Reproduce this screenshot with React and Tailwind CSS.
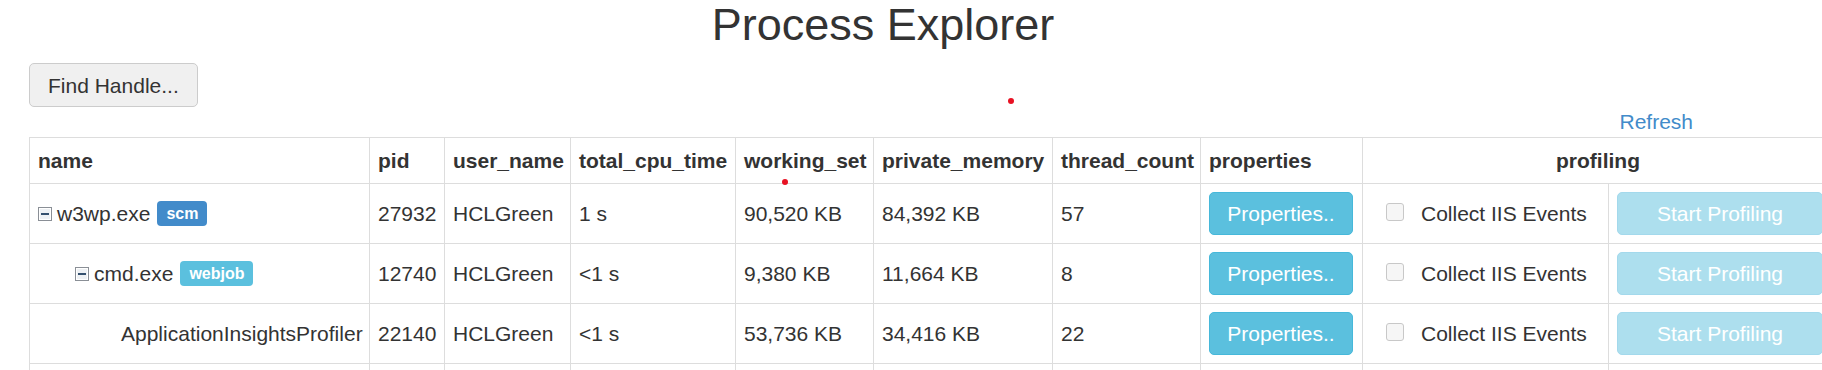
import React from 'react'

const processes = [
  { level: 0, name: 'w3wp.exe', badge: 'scm', pid: '27932', user: 'HCLGreen', cpu: '1 s', ws: '90,520 KB', pm: '84,392 KB', threads: '57', toggle: true },
  { level: 1, name: 'cmd.exe', badge: 'webjob', pid: '12740', user: 'HCLGreen', cpu: '<1 s', ws: '9,380 KB', pm: '11,664 KB', threads: '8', toggle: true },
  { level: 2, name: 'ApplicationInsightsProfiler', pid: '22140', user: 'HCLGreen', cpu: '<1 s', ws: '53,736 KB', pm: '34,416 KB', threads: '22' },
]

const columns = ['name', 'pid', 'user_name', 'total_cpu_time', 'working_set', 'private_memory', 'thread_count', 'properties']
const widths = [340, 75, 126, 165, 138, 179, 148, 162, 246, 225]

function CollapseIcon() {
  return (
    <svg width="14" height="14" viewBox="0 0 14 14" className="shrink-0">
      <rect x="0.5" y="0.5" width="13" height="13" fill="#eef1f4" stroke="#8a8f96" />
      <rect x="1.5" y="1.5" width="11" height="11" fill="none" stroke="#ffffff" />
      <rect x="3" y="6" width="8" height="2" fill="#34506e" />
    </svg>
  )
}

function Badge({ label }) {
  const color = label === 'scm' ? 'bg-[#428bca]' : 'bg-[#5bc0de]'
  return (
    <span className={`${color} ml-[7px] inline-flex h-[25px] items-center rounded-[4px] px-[9px] text-[16px] font-bold leading-none text-white`}>
      {label}
    </span>
  )
}

function NameCell({ p }) {
  const indent = p.level === 0 ? 'pl-2' : p.level === 1 ? 'pl-[45px]' : 'pl-[91px]'
  return (
    <td className={`border border-[#dddddd] ${indent} pr-2 align-middle`}>
      <div className="flex items-center whitespace-nowrap">
        {p.toggle && <CollapseIcon />}
        <span className={p.toggle ? 'ml-[5px]' : ''}>{p.name}</span>
        {p.badge && <Badge label={p.badge} />}
      </div>
    </td>
  )
}

export default function App() {
  const cell = 'border border-[#dddddd] px-2 align-middle whitespace-nowrap'

  return (
    <div className="relative h-[370px] w-[1822px] overflow-hidden bg-white text-[#333333]" style={{ fontFamily: '"Liberation Sans", Arial, sans-serif' }}>
      <h1 className="m-0 w-[1766px] text-center text-[45px] font-normal leading-[50px]">Process Explorer</h1>

      <div className="mt-[13px] pl-[29px]">
        <button className="h-[44px] rounded-[5px] border border-[#cccccc] bg-[#f0f0f0] px-[18px] text-[21px] leading-none text-[#333333]">
          Find Handle...
        </button>
      </div>

      <div className="flex h-[30px] w-[1693px] items-center justify-end">
        <a className="text-[21px] leading-[30px] text-[#428bca]">Refresh</a>
      </div>

      <div className="pl-[29px]">
        <table className="w-[1804px] table-fixed border-collapse text-[21px] leading-[26px]">
          <colgroup>
            {widths.map((w, i) => (
              <col key={i} style={{ width: w }} />
            ))}
          </colgroup>
          <thead>
            <tr className="h-[46px]">
              {columns.map(c => (
                <th key={c} className={`${cell} text-left font-bold`}>{c}</th>
              ))}
              <th colSpan={2} className={`${cell} text-center font-bold`}>profiling</th>
            </tr>
          </thead>
          <tbody>
            {processes.map(p => (
              <tr key={p.pid} className="h-[60px]">
                <NameCell p={p} />
                <td className={cell}>{p.pid}</td>
                <td className={cell}>{p.user}</td>
                <td className={cell}>{p.cpu}</td>
                <td className={cell}>{p.ws}</td>
                <td className={cell}>{p.pm}</td>
                <td className={cell}>{p.threads}</td>
                <td className={cell}>
                  <button className="h-[43px] w-[144px] rounded-[5px] border border-[#46b8da] bg-[#5bc0de] text-[21px] leading-none text-white">
                    Properties..
                  </button>
                </td>
                <td className="border border-[#dddddd] pl-[23px] pr-2 align-middle whitespace-nowrap">
                  <div className="flex items-center">
                    <span className="-mt-[4px] h-[18px] w-[18px] shrink-0 rounded-[3px] border border-[#c8c8c8] bg-[#f6f6f6]"></span>
                    <span className="ml-[17px]">Collect IIS Events</span>
                  </div>
                </td>
                <td className={cell}>
                  <button disabled className="h-[43px] w-[206px] rounded-[5px] border border-[#a3d9ec] bg-[#addfee] text-[21px] leading-none text-white">
                    Start Profiling
                  </button>
                </td>
              </tr>
            ))}
            <tr className="h-[60px]">
              {widths.map((w, i) => (
                <td key={i} className={cell}></td>
              ))}
            </tr>
          </tbody>
        </table>
      </div>

      {/* click markers */}
      <span className="absolute left-[1008px] top-[98px] h-[6px] w-[6px] rounded-full bg-[#e81123]"></span>
      <span className="absolute left-[782px] top-[179px] h-[6px] w-[6px] rounded-full bg-[#e81123]"></span>
    </div>
  )
}
